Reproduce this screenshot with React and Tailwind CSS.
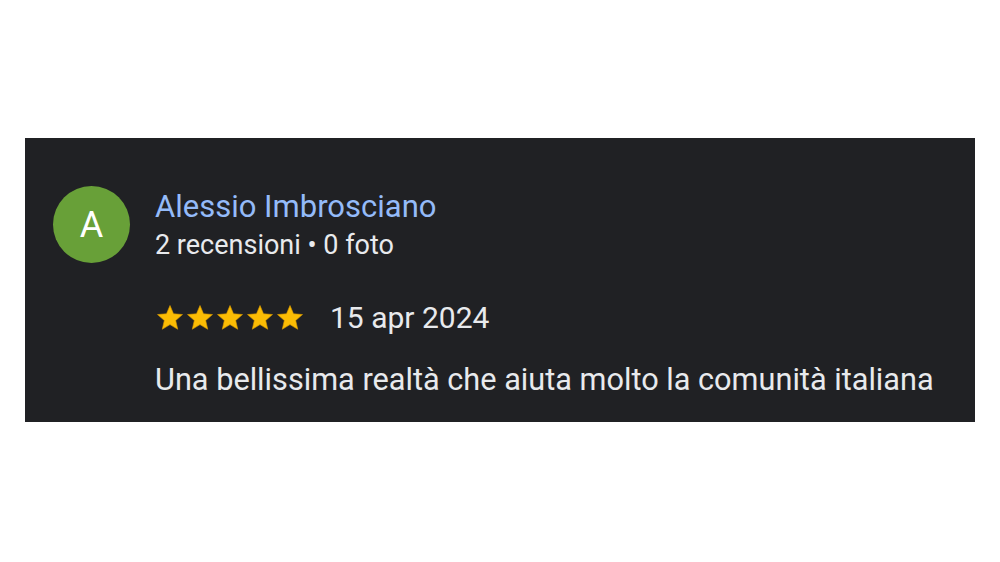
function Star() {
  return (
    <svg width="30" height="30" viewBox="0 0 24 24">
      <path
        d="M12 17.27L18.18 21l-1.64-7.03L22 9.24l-7.19-.61L12 2 9.19 8.63 2 9.24l5.46 4.73L5.82 21z"
        fill="#fbbc04"
        stroke="#d99a00"
        strokeWidth="0.5"
        strokeLinejoin="round"
      />
    </svg>
  )
}

export default function App() {
  return (
    <div className="w-[1000px] h-[562px] bg-white flex flex-col pt-[138px] px-[25px]" style={{ fontFamily: 'Roboto, "Liberation Sans", sans-serif' }}>
      <div className="bg-[#202124] h-[284px] pl-[28px] pt-[48px]">
        {/* header */}
        <div className="flex items-start gap-[25px]">
          <div className="w-[77px] h-[77px] rounded-full bg-[#68a038] flex items-center justify-center flex-shrink-0">
            <span className="text-white text-[36px] leading-none">A</span>
          </div>
          <div className="flex flex-col mt-[2px]">
            <span className="text-[#94bbf9] text-[31px] leading-[38px]">Alessio Imbrosciano</span>
            <span className="text-[#e8eaed] text-[27px] leading-[38px]">2 recensioni • 0 foto</span>
          </div>
        </div>

        {/* rating */}
        <div className="ml-[102px] mt-[36px] flex items-center gap-[25px] h-[36px]">
          <div className="flex items-center">
            {[0, 1, 2, 3, 4].map(i => <Star key={i} />)}
          </div>
          <span className="text-[#e8eaed] text-[30px] leading-[36px]">15 apr 2024</span>
        </div>

        <p className="ml-[102px] mt-[26px] text-[#e8eaed] text-[30.7px] leading-[36px]">
          Una bellissima realtà che aiuta molto la comunità italiana
        </p>
      </div>
    </div>
  )
}
